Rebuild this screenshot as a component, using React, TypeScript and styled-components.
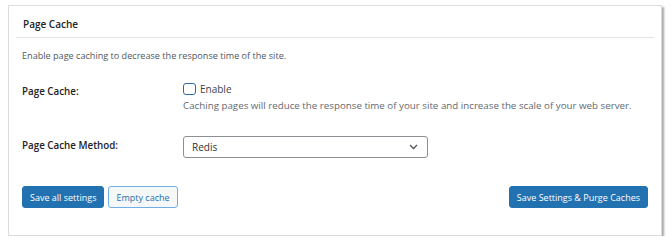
import React from 'react';
import styled, { createGlobalStyle } from 'styled-components';

const GlobalStyle = createGlobalStyle`
  body {
    margin: 0;
    background: #fff;
    font-family: "Open Sans", "Noto Sans", sans-serif;
    color: #1d2327;
  }
`;

const Panel = styled.div`
  box-sizing: border-box;
  margin: 5px 0 0 8px;
  width: 654px;
  height: 231px;
  border: 1px solid #dcdcde;
  background: #fff;
  box-shadow: 2px 2px 2px rgba(0, 0, 0, 0.35);
`;

const Header = styled.div`
  margin: 0 7px;
  height: 32px;
  border-bottom: 1px solid #e2e4e7;
  display: flex;
  align-items: center;
  padding: 4px 0 0 7px;
  box-sizing: border-box;
  font-size: 10px;
  font-weight: 600;
`;

const Body = styled.div`
  padding: 11px 13px 0 13px;
`;

const Intro = styled.p`
  margin: 0;
  font-size: 9.1px;
  color: #50575e;
`;

const Row = styled.div<{ $top: number }>`
  display: grid;
  grid-template-columns: 161px 1fr;
  margin-top: ${(p) => p.$top}px;
`;

const Label = styled.div`
  font-size: 9.8px;
  font-weight: 600;
  padding-top: 3px;
`;

const CheckLine = styled.label`
  display: flex;
  align-items: center;
  gap: 4px;
  font-size: 10px;
  color: #3c434a;
`;

const Box = styled.span`
  width: 13px;
  height: 12px;
  box-sizing: border-box;
  border: 1.5px solid #2c6ba5;
  border-radius: 3px;
  background: #fff;
`;

const Hint = styled.p`
  margin: 3px 0 0 0;
  font-size: 9.75px;
  color: #646970;
`;

const Select = styled.div`
  box-sizing: border-box;
  width: 245px;
  height: 22px;
  border: 1px solid #8c8f94;
  border-radius: 3px;
  display: flex;
  align-items: center;
  justify-content: space-between;
  padding: 0 9px 0 8px;
  font-size: 10px;
  color: #2c3338;
`;

const Actions = styled.div`
  display: flex;
  align-items: center;
  gap: 4px;
  margin-top: 28px;
`;

const Button = styled.button<{ $primary?: boolean }>`
  box-sizing: border-box;
  height: 22px;
  padding: 0 7px;
  border-radius: 3px;
  font-family: inherit;
  font-size: 9px;
  cursor: pointer;
  border: 1px solid ${(p) => (p.$primary ? '#2271b1' : '#72aee6')};
  background: ${(p) => (p.$primary ? '#2271b1' : '#f6f7f7')};
  color: ${(p) => (p.$primary ? '#fff' : '#2271b1')};
`;

const Spacer = styled.div`
  flex: 1;
`;

export default function App() {
  return (
    <>
      <GlobalStyle />
      <Panel>
        <Header>Page Cache</Header>
        <Body>
          <Intro>Enable page caching to decrease the response time of the site.</Intro>
          <Row $top={20}>
            <Label>Page Cache:</Label>
            <div>
              <CheckLine>
                <Box />
                Enable
              </CheckLine>
              <Hint>
                Caching pages will reduce the response time of your site and increase the scale of your web server.
              </Hint>
            </div>
          </Row>
          <Row $top={24}>
            <Label>Page Cache Method:</Label>
            <Select>
              Redis
              <svg width="9" height="6" viewBox="0 0 9 6">
                <path d="M1 1l3.5 3.5L8 1" fill="none" stroke="#50575e" strokeWidth="1.3" />
              </svg>
            </Select>
          </Row>
          <Actions>
            <Button $primary>Save all settings</Button>
            <Button>Empty cache</Button>
            <Spacer />
            <Button $primary>Save Settings &amp; Purge Caches</Button>
          </Actions>
        </Body>
      </Panel>
    </>
  );
}
